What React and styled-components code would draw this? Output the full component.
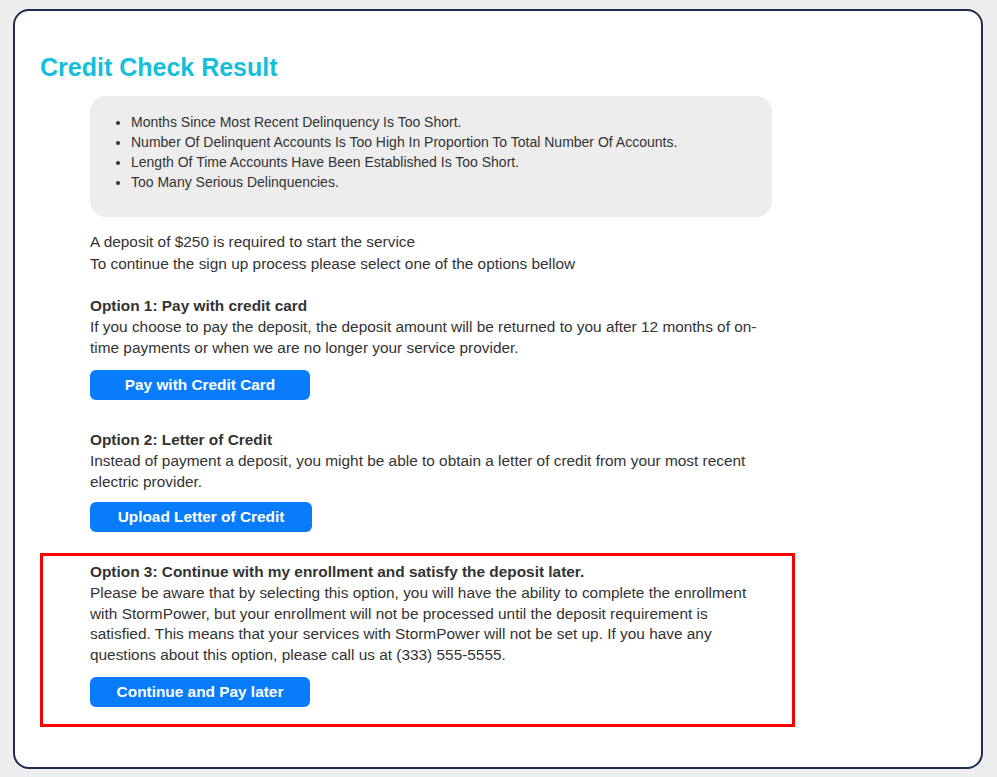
import React from "react";
import styled, { createGlobalStyle } from "styled-components";

const GlobalStyle = createGlobalStyle`
  html, body {
    margin: 0;
    background: #eeeeee;
  }
  body {
    font-family: "Liberation Sans", Arial, sans-serif;
    color: #333333;
  }
`;

// styled-components
const Page = styled.div`
  padding: 9px 14px 8px 13px;
`;
const Card = styled.div`
  background: #ffffff;
  border: 2px solid #1f2b4f;
  border-radius: 16px;
  padding: 42px 25px 40px 25px;
`;
const Title = styled.h2`
  margin: 0 0 15px 0;
  font-size: 25px;
  font-weight: bold;
  line-height: 28px;
  color: #13bfdb;
`;
const Content = styled.div`
  margin-left: 50px;
  width: 682px;
`;
const ReasonBox = styled.div`
  background: #ededed;
  border-radius: 16px;
  padding: 16px 0 25px 0;
`;
const ReasonList = styled.ul`
  margin: 0;
  padding-left: 41px;
  font-size: 14px;
  line-height: 20px;
`;
const Text = styled.p`
  margin: 0;
  font-size: 15.4px;
  line-height: 20.5px;
`;
const Intro = styled.div`
  margin-top: 14px;
  ${Text} {
    line-height: 22px;
  }
`;
const Option = styled.div`
  margin-top: ${(p) => p.gap || 20}px;
`;
const OptionTitle = styled.div`
  font-size: 15.4px;
  font-weight: bold;
  line-height: 23px;
`;
const Button = styled.button`
  display: block;
  margin-top: ${(p) => p.top || 12}px;
  width: ${(p) => p.w}px;
  height: 30px;
  padding: 0;
  border: none;
  border-radius: 6px;
  background: #087cfa;
  color: #ffffff;
  font-family: "Liberation Sans", Arial, sans-serif;
  font-size: 15.4px;
  font-weight: bold;
  cursor: pointer;
`;
const Highlight = styled.div`
  margin-top: 21px;
  width: 755px;
  box-sizing: border-box;
  border: 3px solid #ff0000;
  padding: 4px 20px 17px 47px;
`;

const reasons = [
  "Months Since Most Recent Delinquency Is Too Short.",
  "Number Of Delinquent Accounts Is Too High In Proportion To Total Number Of Accounts.",
  "Length Of Time Accounts Have Been Established Is Too Short.",
  "Too Many Serious Delinquencies.",
];

export default function App() {
  return (
    <>
      <GlobalStyle />
      <Page>
        <Card>
          <Title>Credit Check Result</Title>
          <Content>
            <ReasonBox>
              <ReasonList>
                {reasons.map((r) => (
                  <li key={r}>{r}</li>
                ))}
              </ReasonList>
            </ReasonBox>
            <Intro>
              <Text>A deposit of $250 is required to start the service</Text>
              <Text>To continue the sign up process please select one of the options bellow</Text>
            </Intro>
            <Option gap={19}>
              <OptionTitle>Option 1: Pay with credit card</OptionTitle>
              <Text>
                If you choose to pay the deposit, the deposit amount will be returned to you after 12 months of on-time payments or when we are no longer your service provider.
              </Text>
              <Button w={220}>Pay with Credit Card</Button>
            </Option>
            <Option gap={28}>
              <OptionTitle>Option 2: Letter of Credit</OptionTitle>
              <Text>
                Instead of payment a deposit, you might be able to obtain a letter of credit from your most recent electric provider.
              </Text>
              <Button w={222} top={10}>Upload Letter of Credit</Button>
            </Option>
          </Content>
          <Highlight>
            <OptionTitle>Option 3: Continue with my enrollment and satisfy the deposit later.</OptionTitle>
            <Text>
              Please be aware that by selecting this option, you will have the ability to complete the enrollment with StormPower, but your enrollment will not be processed until the deposit requirement is satisfied. This means that your services with StormPower will not be set up. If you have any questions about this option, please call us at (333) 555-5555.
            </Text>
            <Button w={220}>Continue and Pay later</Button>
          </Highlight>
        </Card>
      </Page>
    </>
  );
}
